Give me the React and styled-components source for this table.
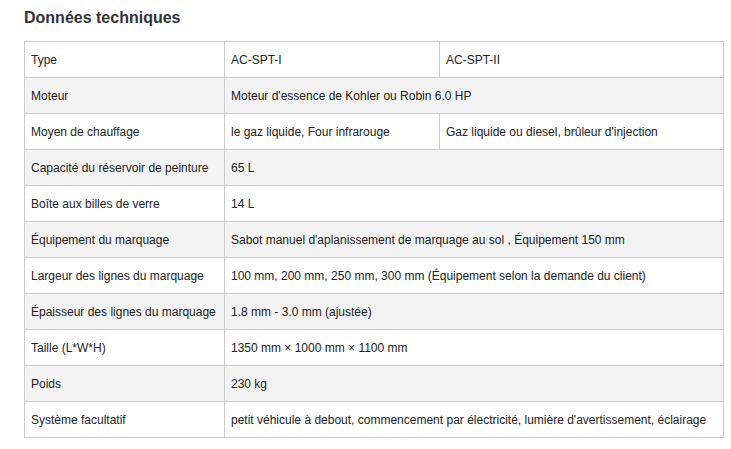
import styled, { createGlobalStyle } from 'styled-components';

const rows = [
  ['Type', 'AC-SPT-I', 'AC-SPT-II'],
  ['Moteur', "Moteur d'essence de Kohler ou Robin 6.0 HP"],
  ['Moyen de chauffage', 'le gaz liquide, Four infrarouge', "Gaz liquide ou diesel, brûleur d'injection"],
  ['Capacité du réservoir de peinture', '65 L'],
  ['Boîte aux billes de verre', '14 L'],
  ['Équipement du marquage', "Sabot manuel d'aplanissement de marquage au sol , Équipement 150 mm"],
  ['Largeur des lignes du marquage', '100 mm, 200 mm, 250 mm, 300 mm (Équipement selon la demande du client)'],
  ['Épaisseur des lignes du marquage', '1.8 mm - 3.0 mm (ajustée)'],
  ['Taille (L*W*H)', '1350 mm × 1000 mm × 1100 mm'],
  ['Poids', '230 kg'],
  ['Système facultatif', "petit véhicule à debout, commencement par électricité, lumière d'avertissement, éclairage"],
];

const App = () => (
  <>
    <GlobalStyle />
    <Page>
      <Title>Données techniques</Title>
      <Table>
        <colgroup>
          <col style={{ width: 200 }} />
          <col style={{ width: 215 }} />
          <col />
        </colgroup>
        <tbody>
          {rows.map(([label, a, b], i) => (
            <Row key={label} $striped={i % 2 === 1}>
              <Cell>{label}</Cell>
              {b ? (
                <>
                  <Cell>{a}</Cell>
                  <Cell>{b}</Cell>
                </>
              ) : (
                <Cell colSpan={2}>{a}</Cell>
              )}
            </Row>
          ))}
        </tbody>
      </Table>
    </Page>
  </>
);

const GlobalStyle = createGlobalStyle`
  body {
    margin: 0;
    background: #fff;
    font-family: Arial, "Liberation Sans", sans-serif;
  }
`;

const Page = styled.div`
  padding: 8px 7px 0 24px;
`;

const Title = styled.h2`
  margin: 0 0 13px;
  color: #333;
  font-size: 16px;
  font-weight: 700;
  line-height: 20px;
`;

const Table = styled.table`
  width: 700px;
  border-collapse: collapse;
  table-layout: fixed;
`;

const Row = styled.tr`
  height: 36px;
  background: ${(p) => (p.$striped ? '#f3f3f3' : '#fff')};
`;

const Cell = styled.td`
  padding: 0 6px;
  border: 1px solid #cccccc;
  color: #222;
  font-size: 12px;
  line-height: 14px;
  vertical-align: middle;
  white-space: nowrap;
`;

export default App;
